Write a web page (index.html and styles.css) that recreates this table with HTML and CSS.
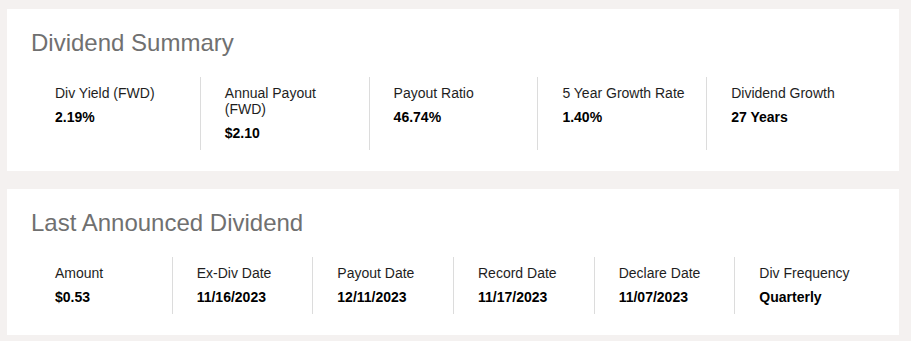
FILE: index.html
```html
<!DOCTYPE html>
<html lang="en">
<head>
<meta charset="utf-8">
<title>Dividends</title>
<link rel="stylesheet" href="styles.css">
</head>
<body>
<section class="card">
  <h2 class="card-title">Dividend Summary</h2>
  <div class="stats stats-5">
    <div class="stat"><div class="label">Div Yield (FWD)</div><div class="value">2.19%</div></div>
    <div class="stat"><div class="label">Annual Payout<br>(FWD)</div><div class="value">$2.10</div></div>
    <div class="stat"><div class="label">Payout Ratio</div><div class="value">46.74%</div></div>
    <div class="stat"><div class="label">5 Year Growth Rate</div><div class="value">1.40%</div></div>
    <div class="stat"><div class="label">Dividend Growth</div><div class="value">27 Years</div></div>
  </div>
</section>
<section class="card">
  <h2 class="card-title">Last Announced Dividend</h2>
  <div class="stats stats-6">
    <div class="stat"><div class="label">Amount</div><div class="value">$0.53</div></div>
    <div class="stat"><div class="label">Ex-Div Date</div><div class="value">11/16/2023</div></div>
    <div class="stat"><div class="label">Payout Date</div><div class="value">12/11/2023</div></div>
    <div class="stat"><div class="label">Record Date</div><div class="value">11/17/2023</div></div>
    <div class="stat"><div class="label">Declare Date</div><div class="value">11/07/2023</div></div>
    <div class="stat"><div class="label">Div Frequency</div><div class="value">Quarterly</div></div>
  </div>
</section>
</body>
</html>
```

FILE: styles.css
```css
* { box-sizing: border-box; }
html, body { margin: 0; }
body {
  background: #f4f1f0;
  padding: 9px 12px 0 7px;
  font-family: "Liberation Sans", Arial, sans-serif;
  display: flex;
  flex-direction: column;
  gap: 18px;
}
.card {
  background: #fff;
  padding: 20px 24px 21px;
}
.card-title {
  margin: 0 0 20px;
  font-size: 24px;
  line-height: 28px;
  font-weight: 400;
  color: #707070;
}
.stats { display: grid; }
.stats-5 { grid-template-columns: repeat(5, 1fr); }
.stats-6 { grid-template-columns: repeat(6, 1fr); }
.stat {
  padding: 8px 0 9px 24px;
  display: flex;
  flex-direction: column;
  gap: 8px;
}
.stat + .stat { border-left: 1px solid #dcdcdc; }
.label {
  font-size: 14px;
  line-height: 16px;
  color: #1e1e1e;
}
.value {
  font-size: 14px;
  line-height: 16px;
  font-weight: 700;
  color: #000;
}
```
